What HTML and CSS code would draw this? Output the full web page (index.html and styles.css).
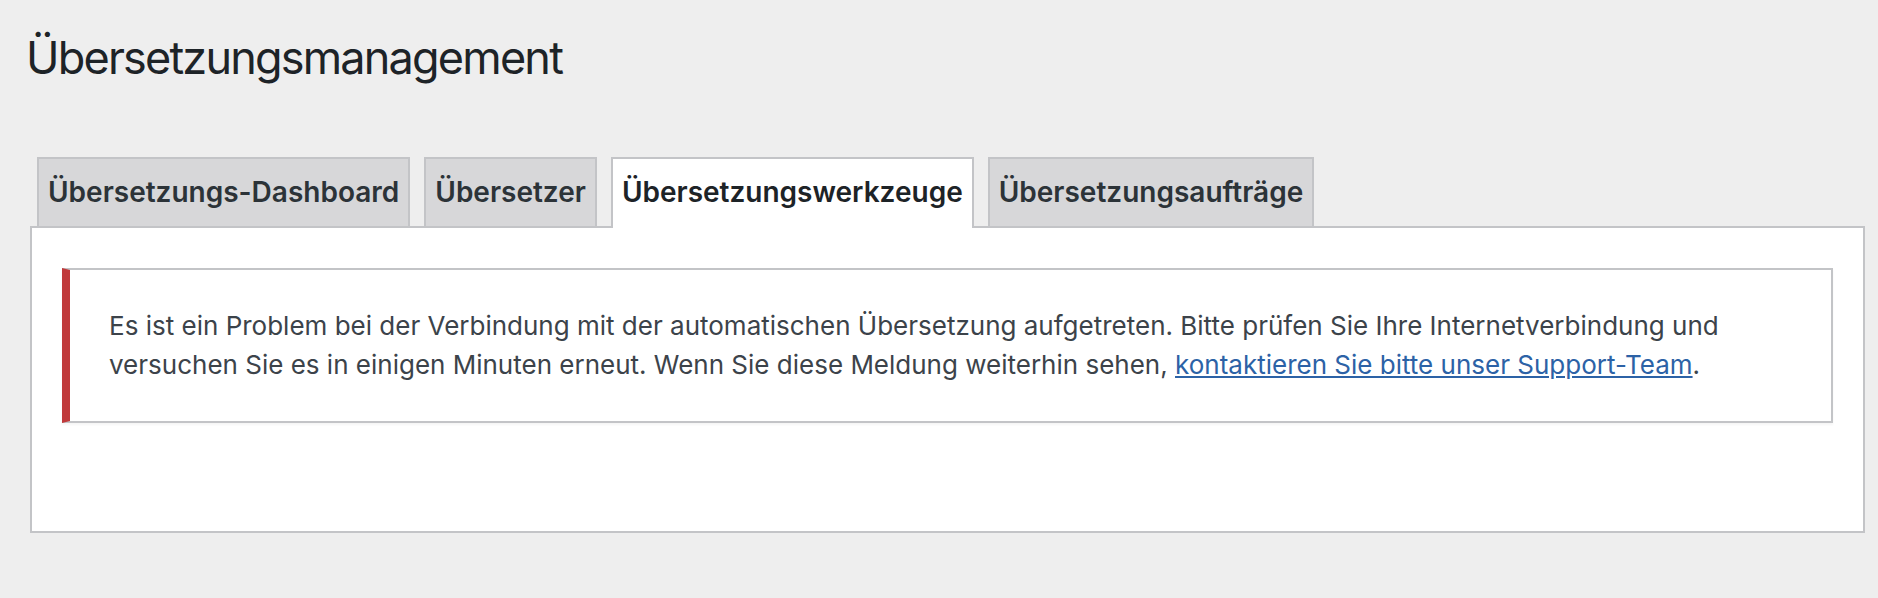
FILE: index.html
```html
<!DOCTYPE html>
<html>
<head>
    <title>Übersetzungsmanagement</title>
    <meta name="viewport" content="width=device-width, initial-scale=1">
    <link rel="stylesheet" href="styles.css">
</head>
<body>
    <div class="wrap">
        <h1 class="page-title">Übersetzungsmanagement</h1>

        <nav class="nav-tabs">
            <a href="#" class="nav-tab">Übersetzungs-Dashboard</a>
            <a href="#" class="nav-tab">Übersetzer</a>
            <a href="#" class="nav-tab nav-tab-active">Übersetzungswerkzeuge</a>
            <a href="#" class="nav-tab">Übersetzungsaufträge</a>
        </nav>

        <div class="tab-panel">
            <div class="notice notice-error">
                <p>Es ist ein Problem bei der Verbindung mit der automatischen Übersetzung aufgetreten. Bitte prüfen Sie Ihre Internetverbindung und versuchen Sie es in einigen Minuten erneut. Wenn Sie diese Meldung weiterhin sehen, <a href="#">kontaktieren Sie bitte unser Support-Team</a>.</p>
            </div>
        </div>
    </div>
</body>
</html>
```

FILE: styles.css
```css
body {
    margin: 0;
    padding: 0;
    font-family: Inter, "Noto Sans", sans-serif;
    background-color: #eeeeee;
    color: #3c434a;
}

.wrap {
    padding: 28px 13px 0 30px;
}

.page-title {
    margin: 0 0 0 -4px;
    font-size: 45px;
    font-weight: 400;
    line-height: 60px;
    letter-spacing: -1.8px; /* tighter, like the system display face */
    color: #1d2327;
}

.nav-tabs {
    position: relative;
    z-index: 1;
    display: flex;
    align-items: flex-start;
    gap: 14px;
    margin-top: 69px;
    padding-left: 7px;
}

.nav-tab {
    height: 67px;
    line-height: 67px;
    padding: 0 9px;
    border: 2px solid #c3c4c7;
    border-bottom: 0;
    background-color: #d7d7d9;
    font-size: 28px;
    font-weight: 600;
    color: #2c3338;
    text-decoration: none;
}

.nav-tab-active {
    margin-bottom: -2px;
    padding-bottom: 2px;
    background-color: #fff;
    color: #1d2327;
}

.tab-panel {
    padding: 40px 30px 108px 30px;
    background-color: #fff;
    border: 2px solid #c3c4c7;
}

.notice {
    padding: 36px 39px 37px 39px;
    background-color: #fff;
    border: 2px solid #c3c4c7;
    border-left: 8px solid #c0393b;
    box-shadow: 0 2px 2px rgba(0, 0, 0, 0.04);
}

.notice p {
    margin: 0;
    font-size: 26px;
    line-height: 39px;
}

.notice a {
    color: #2c62a6;
}
```
